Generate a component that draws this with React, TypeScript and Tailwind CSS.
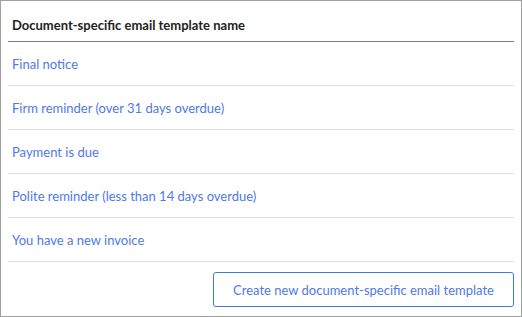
import React from "react";

const rows = [
  "Final notice",
  "Firm reminder (over 31 days overdue)",
  "Payment is due",
  "Polite reminder (less than 14 days overdue)",
  "You have a new invoice",
];

export default function App() {
  return (
    <div
      className="w-[522px] h-[317px] border border-[#a0a0a0] bg-white px-[7px] flex flex-col"
      style={{ fontFamily: "Lato, 'Open Sans', sans-serif" }}
    >
      <div className="h-[41px] border-b border-[#808080] pt-[16px] pl-[4px] text-[13px] leading-[16px] font-bold text-[#222222]">
        Document-specific email template name
      </div>
      {rows.map((r) => (
        <div
          key={r}
          className="h-[44px] border-b border-[#dedede] flex items-center pl-[4px] text-[13px] leading-[16px] text-[#4f78ea]"
        >
          <a href="#" className="cursor-pointer">{r}</a>
        </div>
      ))}
      <div className="flex justify-end pt-[10px]">
        <button className="w-[301px] h-[35px] border border-[#3b7ddd] rounded-[3px] text-[13px] leading-[16px] text-[#4f78ea] bg-white">
          Create new document-specific email template
        </button>
      </div>
    </div>
  );
}
